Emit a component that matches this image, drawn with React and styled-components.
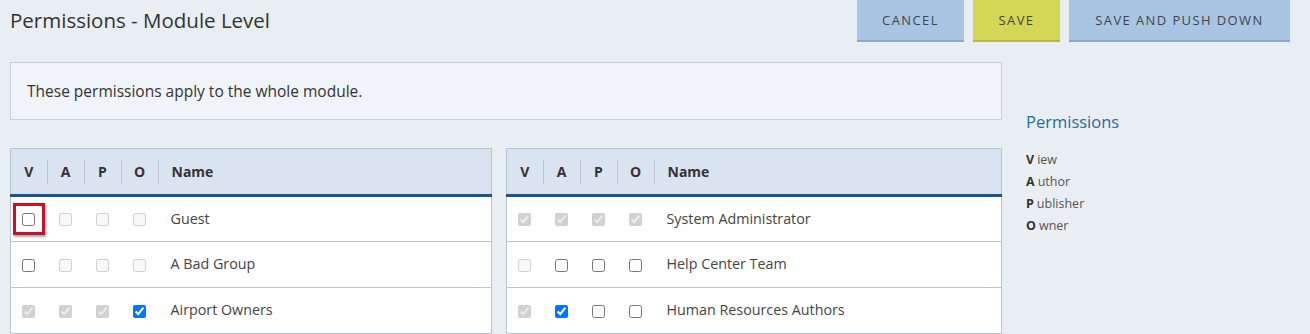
import React from "react";
import styled, { createGlobalStyle } from "styled-components";

const Global = createGlobalStyle`
  html, body { margin: 0; padding: 0; background: #e9eef3; }
  body { font-family: "Open Sans", "Lato", sans-serif; color: #333; }
  *, *::before, *::after { box-sizing: border-box; }
`;

const Page = styled.div`
  width: 1310px;
  height: 334px;
  overflow: hidden;
  padding: 0 20px 0 10px;
`;

const TopBar = styled.div`
  display: flex;
  align-items: flex-start;
  justify-content: space-between;
  height: 42px;
`;

const Title = styled.h1`
  margin: 0;
  padding-top: 6px;
  font-size: 20.5px;
  line-height: 28px;
  font-weight: 400;
  color: #333;
`;

const Buttons = styled.div`
  display: flex;
  gap: 9px;
`;

const Button = styled.button`
  width: ${(p) => p.$w}px;
  height: 42px;
  padding: 0;
  border: none;
  border-bottom: 2px solid ${(p) => (p.$primary ? "#b8ba45" : "#8ea9c8")};
  background: ${(p) => (p.$primary ? "#d4d655" : "#a8c6e4")};
  color: #444;
  font-family: "Open Sans", sans-serif;
  font-size: 13px;
  letter-spacing: 1.4px;
  text-transform: uppercase;
  cursor: pointer;
`;

const Body = styled.div`
  display: flex;
  margin-top: 20px;
`;

const Main = styled.div`
  width: 992px;
  flex: none;
`;

const Info = styled.div`
  height: 58px;
  display: flex;
  align-items: center;
  padding: 0 16px;
  background: #f0f4f9;
  border: 1px solid #c5d1de;
  font-size: 15.5px;
  color: #333;
`;

const Tables = styled.div`
  display: grid;
  grid-template-columns: 482px 1fr;
  gap: 14px;
  margin-top: 28px;
`;

const Table = styled.table`
  width: 100%;
  border-collapse: collapse;
  table-layout: fixed;
  background: #fff;
  border: 1px solid #b7c4d3;
`;

const HeadRow = styled.tr`
  background: #dae4f0;
  border-bottom: 3px solid #1b5488;
`;

const Th = styled.th`
  height: 47px;
  padding: 0;
  width: ${(p) => (p.$name ? "auto" : p.$first ? "36px" : "37px")};
  text-align: ${(p) => (p.$name ? "left" : "center")};
  font-size: 14px;
  font-weight: 700;
  color: #333;
`;

const HeadCell = styled.div`
  display: flex;
  align-items: center;
  justify-content: ${(p) => (p.$name ? "flex-start" : "center")};
  height: 24px;
  padding-left: ${(p) => (p.$name ? "13px" : "0")};
  border-left: ${(p) => (p.$first ? "none" : "1px solid #b9c6d4")};
`;

const Row = styled.tr`
  border-top: 1px solid #b7c4d3;
  &:first-of-type { border-top: none; }
`;

const Td = styled.td`
  height: 46px;
  padding: 0 ${(p) => (p.$name ? "13px" : "0")} 2px;
  text-align: ${(p) => (p.$name ? "left" : "center")};
  font-size: 14.3px;
  color: #444;
  vertical-align: middle;
`;

const BoxWrap = styled.span`
  position: relative;
  display: inline-flex;
  vertical-align: middle;
  ${(p) =>
    p.$highlight &&
    `
    &::after {
      content: "";
      position: absolute;
      left: -9px;
      top: -10px;
      width: 32px;
      height: 32px;
      border: 3px solid #c8102e;
      box-shadow: 1px 2px 2px rgba(0,0,0,0.35);
      pointer-events: none;
    }
  `}
`;

const Check = styled.input.attrs({ type: "checkbox" })`
  margin: 0;
  width: 13px;
  height: 13px;
`;

const Side = styled.aside`
  padding: 49px 0 0 24px;
`;

const SideTitle = styled.h2`
  margin: 0 0 16px;
  font-size: 16.5px;
  line-height: 22px;
  font-weight: 400;
  color: #2a6aa0;
`;

const Legend = styled.ul`
  list-style: none;
  margin: 0;
  padding: 0;
`;

const LegendItem = styled.li`
  font-size: 12.5px;
  line-height: 22px;
  color: #555;
`;

const Key = styled.b`
  color: #333;
  font-weight: 700;
  margin-right: 3px;
`;

// state: "e" enabled unchecked, "ec" enabled checked, "d" disabled unchecked, "dc" disabled checked
const left = [
  { name: "Guest", perms: ["e", "d", "d", "d"], hl: true },
  { name: "A Bad Group", perms: ["e", "d", "d", "d"] },
  { name: "Airport Owners", perms: ["dc", "dc", "dc", "ec"] },
];
const right = [
  { name: "System Administrator", perms: ["dc", "dc", "dc", "dc"] },
  { name: "Help Center Team", perms: ["d", "e", "e", "e"] },
  { name: "Human Resources Authors", perms: ["dc", "ec", "e", "e"] },
];

function PermTable({ rows }) {
  const cols = ["V", "A", "P", "O"];
  return (
    <Table>
      <thead>
        <HeadRow>
          {cols.map((c, i) => (
            <Th key={c} $first={i === 0}>
              <HeadCell $first={i === 0}>{c}</HeadCell>
            </Th>
          ))}
          <Th $name>
            <HeadCell $name>Name</HeadCell>
          </Th>
        </HeadRow>
      </thead>
      <tbody>
        {rows.map((r) => (
          <Row key={r.name}>
            {r.perms.map((s, i) => (
              <Td key={i}>
                <BoxWrap $highlight={r.hl && i === 0}>
                  <Check
                    disabled={s.startsWith("d")}
                    defaultChecked={s.endsWith("c")}
                  />
                </BoxWrap>
              </Td>
            ))}
            <Td $name>{r.name}</Td>
          </Row>
        ))}
      </tbody>
    </Table>
  );
}

export default function App() {
  return (
    <>
      <Global />
      <Page>
        <TopBar>
          <Title>Permissions - Module Level</Title>
          <Buttons>
            <Button $w={107}>Cancel</Button>
            <Button $primary $w={87}>Save</Button>
            <Button $w={221}>Save and Push Down</Button>
          </Buttons>
        </TopBar>
        <Body>
          <Main>
            <Info>These permissions apply to the whole module.</Info>
            <Tables>
              <PermTable rows={left} />
              <PermTable rows={right} />
            </Tables>
          </Main>
          <Side>
            <SideTitle>Permissions</SideTitle>
            <Legend>
              <LegendItem><Key>V</Key>iew</LegendItem>
              <LegendItem><Key>A</Key>uthor</LegendItem>
              <LegendItem><Key>P</Key>ublisher</LegendItem>
              <LegendItem><Key>O</Key>wner</LegendItem>
            </Legend>
          </Side>
        </Body>
      </Page>
    </>
  );
}
